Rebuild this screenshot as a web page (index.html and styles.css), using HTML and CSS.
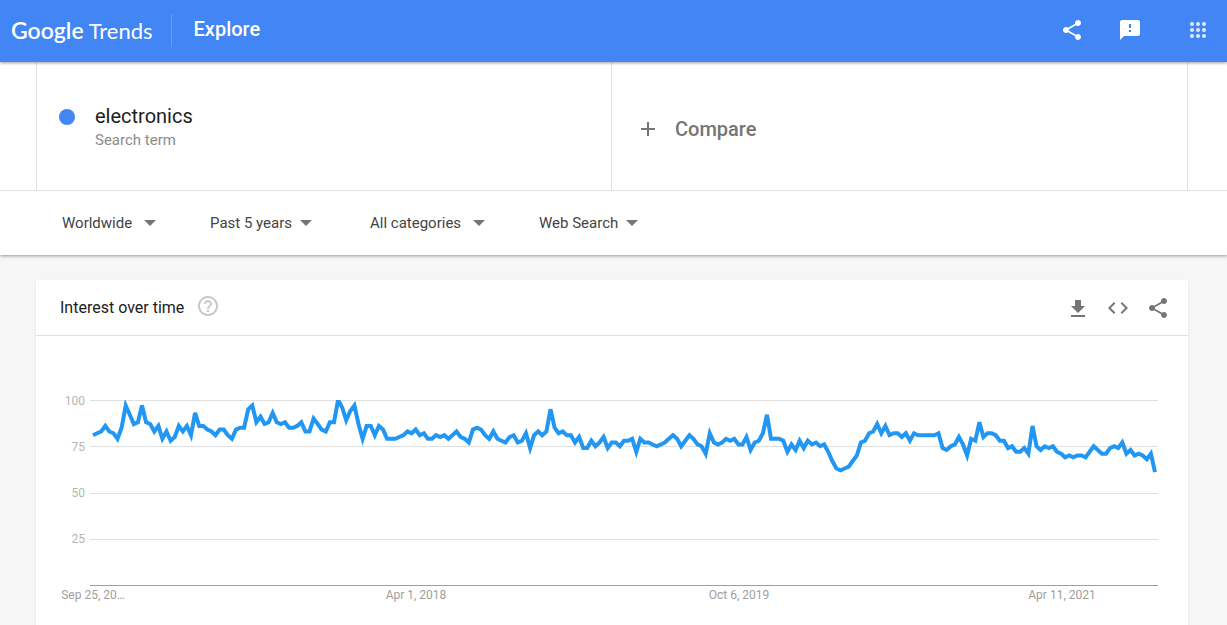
FILE: index.html
```html
<!DOCTYPE html>
<html lang="en">
<head>
<meta charset="utf-8">
<title>electronics - Explore - Google Trends</title>
<link rel="stylesheet" href="styles.css">
</head>
<body>
<svg class="sprite" aria-hidden="true">
  <symbol id="share" viewBox="0 0 24 24"><path d="M18 16.08c-.76 0-1.44.3-1.96.77L8.91 12.7c.05-.23.09-.46.09-.7s-.04-.47-.09-.7l7.05-4.11c.54.5 1.25.81 2.04.81 1.66 0 3-1.34 3-3s-1.34-3-3-3-3 1.34-3 3c0 .24.04.47.09.7L8.04 9.81C7.5 9.31 6.79 9 6 9c-1.66 0-3 1.34-3 3s1.34 3 3 3c.79 0 1.5-.31 2.04-.81l7.12 4.16c-.05.21-.08.43-.08.65 0 1.61 1.31 2.92 2.92 2.92s2.92-1.31 2.92-2.92-1.31-2.92-2.92-2.92z"/></symbol>
  <symbol id="feedback" viewBox="0 0 24 24"><path d="M20 2H4c-1.1 0-1.99.9-1.99 2L2 22l4-4h14c1.1 0 2-.9 2-2V4c0-1.1-.9-2-2-2zm-7 12h-2v-2h2v2zm0-4h-2V6h2v4z"/></symbol>
  <symbol id="apps" viewBox="0 0 24 24"><circle cx="6" cy="6" r="2"/><circle cx="12" cy="6" r="2"/><circle cx="18" cy="6" r="2"/><circle cx="6" cy="12" r="2"/><circle cx="12" cy="12" r="2"/><circle cx="18" cy="12" r="2"/><circle cx="6" cy="18" r="2"/><circle cx="12" cy="18" r="2"/><circle cx="18" cy="18" r="2"/></symbol>
  <symbol id="plus" viewBox="0 0 24 24"><path d="M19 13h-6v6h-2v-6H5v-2h6V5h2v6h6v2z"/></symbol>
  <symbol id="help" viewBox="0 0 24 24"><path d="M11 18h2v-2h-2v2zm1-16C6.48 2 2 6.48 2 12s4.48 10 10 10 10-4.480 10-10S17.520 2 12 2zm0 18c-4.410 0-8-3.590-8-8s3.590-8 8-8 8 3.590 8 8-3.590 8-8 8zm0-14c-2.210 0-4 1.790-4 4h2c0-1.100.9-2 2-2s2 .9 2 2c0 2-3 1.750-3 5h2c0-2.250 3-2.500 3-5 0-2.210-1.790-4-4-4z"/></symbol>
  <symbol id="download" viewBox="0 0 24 24"><path d="M19 10h-4V4H9v6H5l7 7 7-7zM5 19v2h14v-2H5z"/></symbol>
  <symbol id="code" viewBox="0 0 24 24"><path d="M9.400 16.600L4.800 12l4.600-4.600L8 6l-6 6 6 6 1.400-1.400zm5.200 0l4.600-4.600-4.600-4.600L16 6l6 6-6 6-1.400-1.400z"/></symbol>
</svg>

<header class="topbar">
  <a class="logo" href="#" aria-label="Google Trends"><span class="logo-google">Google</span><span class="logo-trends">Trends</span></a>
  <h1 class="page-name">Explore</h1>
  <div class="topbar-actions">
    <button class="icon-button" type="button" aria-label="Share"><svg class="icon"><use href="#share"/></svg></button>
    <button class="icon-button" type="button" aria-label="Send feedback"><svg class="icon"><use href="#feedback"/></svg></button>
    <button class="icon-button apps" type="button" aria-label="Google apps"><svg class="icon"><use href="#apps"/></svg></button>
  </div>
</header>

<main>
  <section class="query">
    <div class="terms">
      <div class="term">
        <span class="term-dot"></span>
        <div>
          <div class="term-name">electronics</div>
          <div class="term-kind">Search term</div>
        </div>
      </div>
      <button class="compare" type="button"><svg class="icon"><use href="#plus"/></svg>Compare</button>
    </div>
    <form class="filters">
      <div class="filter region"><select aria-label="Region"><option>Worldwide</option></select></div>
      <div class="filter period"><select aria-label="Time range"><option>Past 5 years</option></select></div>
      <div class="filter category"><select aria-label="Category"><option>All categories</option></select></div>
      <div class="filter source"><select aria-label="Search type"><option>Web Search</option></select></div>
    </form>
  </section>

  <section class="card">
    <div class="card-header">
      <h2 class="card-title">Interest over time</h2>
      <button class="icon-button help" type="button" aria-label="Help"><svg class="icon"><use href="#help"/></svg></button>
      <div class="card-actions">
        <button class="icon-button" type="button" aria-label="Download"><svg class="icon"><use href="#download"/></svg></button>
        <button class="icon-button" type="button" aria-label="Embed"><svg class="icon"><use href="#code"/></svg></button>
        <button class="icon-button" type="button" aria-label="Share"><svg class="icon"><use href="#share"/></svg></button>
      </div>
    </div>
    <div class="chart">
      <div class="y-axis"><span>100</span><span>75</span><span>50</span><span>25</span></div>
      <div class="plot">
        <svg class="series" viewBox="0 0 1068 184" preserveAspectRatio="none" role="img" aria-label="Interest over time for electronics">
          <polyline id="line" vector-effect="non-scaling-stroke"/>
        </svg>
      </div>
    </div>
    <div class="x-axis"><span>Sep 25, 20…</span><span>Apr 1, 2018</span><span>Oct 6, 2019</span><span>Apr 11, 2021</span></div>
  </section>
</main>
<script src="chart.js"></script>
</body>
</html>
```
FILE: styles.css
```css
* {
  box-sizing: border-box;
}

body {
  margin: 0;
  background: #f6f6f6;
  color: #212121;
  font-family: Roboto, Arial, sans-serif;
}

button,
select {
  border: 0;
  padding: 0;
  background: none;
  color: inherit;
  font: inherit;
  cursor: pointer;
}

.sprite {
  display: none;
}

.icon {
  display: block;
  width: 24px;
  height: 24px;
  fill: currentColor;
}

.topbar {
  position: relative;
  display: flex;
  align-items: center;
  height: 62px;
  padding: 0 17px 2px 11px;
  background: #4285f4;
  box-shadow: 0 1px 3px rgba(0, 0, 0, 0.4);
  color: #fff;
}

.logo {
  display: flex;
  align-items: baseline;
  gap: 5px;
  height: 33px;
  padding-right: 18px;
  border-right: 1px solid #689df6;
  color: inherit;
  font-family: Lato, sans-serif;
  font-size: 22px;
  line-height: 33px;
  text-decoration: none;
}

.logo-google {
  font-size: 23px;
  font-weight: 600;
}

.page-name {
  margin: 0 0 2px 22px;
  font-size: 20px;
  font-weight: 500;
  line-height: 24px;
}

.topbar-actions {
  display: flex;
  gap: 34px;
  margin-left: auto;
}

.apps {
  margin-left: 10px;
  opacity: 0.85;
}

.query {
  background: #fff;
  box-shadow: 0 1px 3px rgba(0, 0, 0, 0.4);
}

.terms {
  display: grid;
  grid-template-columns: 1fr 1fr;
  height: 129px;
  padding: 0 39px 0 36px;
  border-bottom: 1px solid #e0e0e0;
}

.term {
  display: flex;
  gap: 20px;
  padding: 42px 22px 0;
  border: solid #e0e0e0;
  border-width: 0 1px;
}

.term-dot {
  width: 16px;
  height: 16px;
  margin-top: 5px;
  border-radius: 50%;
  background: #4285f4;
}

.term-name {
  font-size: 20px;
  line-height: 24px;
}

.term-kind {
  color: #8c8c8c;
  font-size: 15px;
  line-height: 24px;
}

.compare {
  display: flex;
  align-items: center;
  gap: 15px;
  padding: 5px 24px 0;
  border-right: 1px solid #e0e0e0;
  color: #757575;
  font-size: 20px;
  font-weight: 500;
}

.filters {
  display: flex;
  gap: 54px;
  padding: 20px 62px;
}

.filter {
  position: relative;
}

.filter::after {
  content: "";
  position: absolute;
  top: 9px;
  right: 0;
  border: solid transparent;
  border-width: 6px 6px 0;
  border-top-color: #757575;
  pointer-events: none;
}

.filter select {
  width: 100%;
  height: 24px;
  appearance: none;
  color: #444;
  font-size: 15px;
}

.region {
  width: 94px;
}

.period {
  width: 102px;
  margin-right: 4px;
}

.category {
  width: 115px;
}

.source {
  width: 99px;
}

.card {
  margin: 25px 39px 0 36px;
  min-height: 345px;
  border-radius: 2px 2px 0 0;
  background: #fff;
  box-shadow: 0 1px 2px rgba(0, 0, 0, 0.15);
}

.card-header {
  display: flex;
  align-items: center;
  height: 56px;
  padding: 0 18px 0 24px;
  border-bottom: 1px solid #e0e0e0;
  color: #757575;
}

.card-title {
  margin: 0;
  color: #212121;
  font-size: 16px;
  font-weight: 400;
  line-height: 24px;
}

.help {
  margin: 0 0 4px 12px;
  color: #c7c7c7;
}

.card-actions {
  display: flex;
  gap: 16px;
  margin-left: auto;
}

.chart {
  display: grid;
  grid-template-columns: 49px 1fr;
  gap: 5px;
  padding: 64px 30px 0 0;
}

.y-axis {
  display: grid;
  grid-auto-rows: 46px;
  margin-top: -6px;
  color: #b5b5b5;
  font-size: 12px;
  line-height: 14px;
  text-align: right;
}

.plot {
  height: 186px;
  border-bottom: 1px solid #9e9e9e;
  background: linear-gradient(
    #e0e0e0 0 1px, transparent 1px 46px,
    #e0e0e0 46px 47px, transparent 47px 93px,
    #e0e0e0 93px 94px, transparent 94px 139px,
    #e0e0e0 139px 140px, transparent 140px
  );
}

.series {
  display: block;
  width: 100%;
  height: 185px;
  fill: none;
  stroke: #2196f3;
  stroke-width: 4px;
}

.x-axis {
  display: flex;
  justify-content: space-between;
  padding: 2px 91px 0 22px;
  color: #9e9e9e;
  font-size: 12px;
  line-height: 14px;
  text-align: center;
}

.x-axis span {
  width: 70px;
  white-space: nowrap;
}
```
FILE: chart.js
```js
const values = [
  81, 82, 83, 86, 83, 82, 79, 85, 97, 92, 87, 88, 97, 88, 87, 83, 86, 79, 83, 78,
  80, 86, 83, 86, 81, 93, 86, 86, 84, 83, 81, 84, 84, 81, 79, 84, 85, 85, 95, 97,
  88, 91, 87, 88, 93, 88, 87, 88, 85, 85, 86, 88, 83, 83, 90, 87, 84, 83, 88, 88,
  100, 96, 89, 94, 97, 87, 79, 86, 86, 81, 86, 84, 79, 79, 79, 80, 81, 83, 82, 84,
  81, 82, 79, 79, 81, 80, 81, 79, 81, 83, 80, 79, 77, 84, 85, 84, 81, 79, 83, 79,
  78, 77, 80, 81, 77, 78, 82, 74, 81, 83, 81, 83, 95, 85, 82, 83, 81, 81, 77, 80,
  74, 74, 78, 75, 77, 80, 74, 77, 77, 75, 78, 78, 79, 72, 79, 77, 77, 76, 75, 76,
  77, 79, 81, 79, 75, 78, 81, 79, 76, 75, 71, 82, 77, 76, 77, 79, 78, 79, 76, 76,
  80, 73, 77, 78, 82, 92, 79, 79, 79, 78, 72, 76, 73, 78, 74, 78, 76, 77, 75, 76,
  72, 67, 63, 62, 63, 64, 67, 70, 77, 78, 82, 83, 87, 82, 86, 81, 82, 82, 80, 82,
  78, 82, 81, 81, 81, 81, 81, 82, 74, 73, 75, 76, 80, 76, 70, 79, 78, 88, 80, 82,
  82, 81, 78, 78, 74, 75, 72, 72, 74, 71, 86, 75, 73, 75, 74, 75, 72, 71, 69, 70,
  69, 70, 70, 69, 72, 75, 73, 71, 71, 74, 75, 74, 77, 71, 73, 70, 71, 70, 68, 71,
  61
];

const first = 3;
const last = 1065;
const height = 184;
const step = (last - first) / (values.length - 1);

document.getElementById("line").setAttribute(
  "points",
  values.map((v, i) => `${(first + i * step).toFixed(1)},${(height * (1 - v / 100)).toFixed(1)}`).join(" ")
);
```
